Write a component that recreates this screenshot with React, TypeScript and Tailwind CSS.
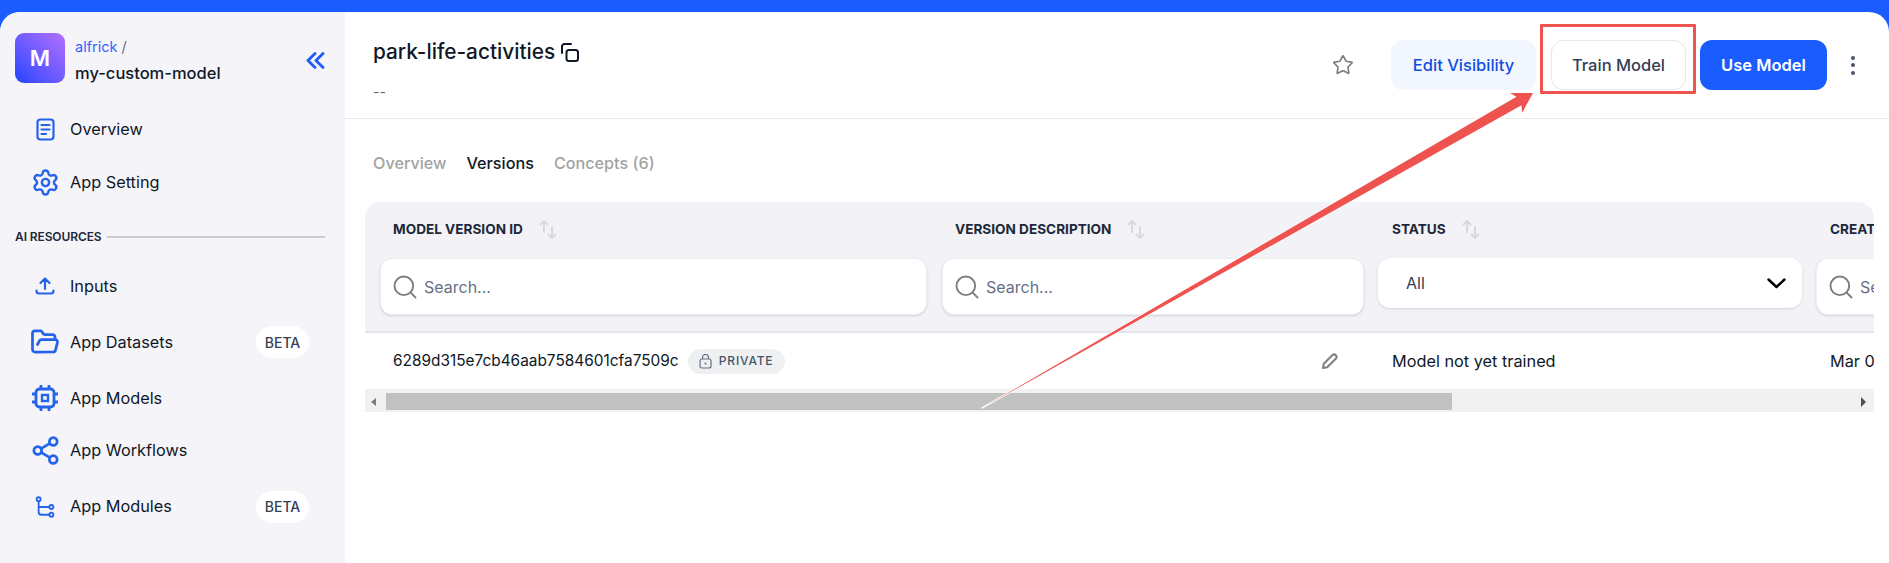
import { FolderOpen, Search, Settings, Share2, Star } from 'lucide-react';
import type { ReactNode } from 'react';

const OverviewIcon = () => (
    <svg width="19" height="23" viewBox="0 0 19 23" fill="none" stroke="currentColor" strokeWidth="2.2" strokeLinecap="round">
        <rect x="1.500" y="1.500" width="16" height="20" rx="3" />
        <path d="M5.500 7h8M5.500 11.500h8M5.500 16h4.500" />
    </svg>
);

const UploadIcon = () => (
    <svg width="20" height="18" viewBox="0 0 20 18" fill="none" stroke="currentColor" strokeWidth="2.2" strokeLinecap="round" strokeLinejoin="round">
        <path d="M10 12V2M5.500 6 10 1.500 14.500 6M1.500 13.500v.500A2.500 2.500 0 0 0 4 16.500h12a2.500 2.500 0 0 0 2.500-2.500v-.500" />
    </svg>
);

const ChipIcon = () => (
    <svg width="28" height="28" viewBox="0 0 28 28" fill="none" stroke="currentColor" strokeWidth="2.800">
        <rect x="5" y="5" width="18" height="18" rx="3.500" />
        <rect x="11" y="11" width="6" height="6" strokeWidth="2.400" />
        <path d="M10 1v4M18 1v4M10 23v4M18 23v4M1 10h4M1 18h4M23 10h4M23 18h4" />
    </svg>
);

const ModulesIcon = () => (
    <svg width="20" height="22" viewBox="0 0 22 24" fill="none" stroke="currentColor" strokeWidth="2">
        <circle cx="4" cy="3.500" r="2.200" />
        <circle cx="18" cy="12" r="2.200" />
        <circle cx="18" cy="20.500" r="2.200" />
        <path d="M4 6v11.500a3 3 0 0 0 3 3h8.800M4 12h11.800" />
    </svg>
);

const CollapseIcon = () => (
    <svg width="19" height="17" viewBox="0 0 19 17" fill="none" stroke="#1b5cff" strokeWidth="2.800" strokeLinecap="round" strokeLinejoin="round">
        <path d="M9 1.500 2 8.500l7 7M17 1.500l-7 7 7 7" />
    </svg>
);

const CopyIcon = () => (
    <svg width="18" height="19" viewBox="0 0 18 19" fill="none" stroke="#101828" strokeWidth="2" strokeLinecap="round">
        <rect x="5.500" y="7" width="11.500" height="11" rx="2.500" />
        <path d="M1 10V3.500A2.500 2.500 0 0 1 3.500 1H10" />
    </svg>
);

const SortIcon = () => (
    <svg width="20" height="21" viewBox="0 0 20 21" fill="none" stroke="#d5d9e0" strokeWidth="2" strokeLinecap="round" strokeLinejoin="round">
        <path d="M6 13V2M2.500 5.500 6 2l3.500 3.500M14 8v11M10.500 15.500 14 19l3.500-3.500" />
    </svg>
);

const LockIcon = () => (
    <svg width="13" height="15" viewBox="0 0 13 15" fill="none" stroke="#667085" strokeWidth="1.200">
        <rect x="1" y="5" width="11" height="9" rx="2" />
        <path d="M3.500 5V3.500a3 3 0 0 1 6 0V5" />
        <circle cx="6.500" cy="9.500" r="1" fill="#667085" stroke="none" />
    </svg>
);

const PencilIcon = () => (
    <svg width="18" height="18" viewBox="0 0 18 18" fill="none" stroke="#7d7d7d" strokeWidth="2" strokeLinejoin="round">
        <path d="M2 16l.800-4.200L11.500 3a2.500 2.500 0 0 1 3.500 3.500L6.200 15.200z" />
    </svg>
);

const SelectChevron = () => (
    <svg width="19" height="11" viewBox="0 0 19 11" fill="none" stroke="#000000" strokeWidth="2.400" strokeLinecap="round" strokeLinejoin="round">
        <path d="M1.500 1.500 9.500 9l8-7.500" />
    </svg>
);

const BetaPill = () => (
    <span className="ml-auto mr-[36px] flex h-8 w-[53px] items-center justify-center rounded-full bg-white text-[14px] font-medium text-[#344054]">
        BETA
    </span>
);

const NavItem = ({ icon, label, beta, height }: { icon: ReactNode; label: string; beta?: boolean; height: string }) => (
    <div className={`flex items-center ${height}`}>
        <span className="flex w-[70px] shrink-0 items-center justify-center pl-[20px] text-[#2563eb]">{icon}</span>
        <span className="text-[16.300px] text-[#101828]">{label}</span>
        {beta && <BetaPill />}
    </div>
);

const SearchBox = ({ width }: { width: string }) => (
    <div className={`flex h-[57px] shrink-0 items-center gap-[5px] rounded-xl border border-[#eceef2] bg-white pl-[10px] shadow-sm ${width}`}>
        <Search size={28} strokeWidth={1.600} className="shrink-0 text-[#7d7d7d]" />
        <span className="text-[16px] text-[#667085]">Search...</span>
    </div>
);

const ColumnLabel = ({ label }: { label: string }) => (
    <div className="flex items-center gap-[15px]">
        <span className="text-[13.600px] font-bold whitespace-nowrap text-[#1d2939]">{label}</span>
        <SortIcon />
    </div>
);

const App = () => {
    return (
        <div className="relative h-[563px] w-full overflow-hidden bg-[#1b5cff] pt-3 font-['Inter',sans-serif]">
            <div className="flex h-full overflow-hidden rounded-t-[20px] bg-white">
                <aside className="w-[345px] shrink-0 bg-[#f4f4f9]">
                    <div className="flex h-[91px] items-start pl-[15px] pt-[21px]">
                        <div className="flex h-[50px] w-[50px] items-center justify-center rounded-[9px] bg-gradient-to-tr from-[#1b40ff] to-[#b46cff] text-[22px] font-semibold text-white">
                            M
                        </div>
                        <div className="ml-[10px] flex w-[231px] shrink-0 flex-col">
                            <span className="text-[14.500px] leading-[28px] text-[#3366ff]">
                                alfrick <span className="text-[#667085]">/</span>
                            </span>
                            <span className="pt-[1px] text-[16.500px] leading-[22px] font-medium text-[#101828]">my-custom-model</span>
                        </div>
                        <span className="mt-[19px]"><CollapseIcon /></span>
                    </div>

                    <NavItem icon={<OverviewIcon />} label="Overview" height="h-[53px]" />
                    <NavItem icon={<Settings size={29} strokeWidth={2} />} label="App Setting" height="h-[53px]" />

                    <div className="flex h-[49px] items-center gap-[5px] pt-[6px] pl-[15px] pr-[20px]">
                        <span className="text-[12px] font-semibold tracking-[-0.1px] whitespace-nowrap text-[#1d2939]">AI RESOURCES</span>
                        <div className="h-[2px] flex-1 bg-[#cccccc]" />
                    </div>

                    <NavItem icon={<UploadIcon />} label="Inputs" height="h-14" />
                    <NavItem icon={<FolderOpen size={30} strokeWidth={2.200} />} label="App Datasets" beta height="h-14" />
                    <NavItem icon={<ChipIcon />} label="App Models" height="h-14" />
                    <NavItem icon={<Share2 size={31} strokeWidth={2.100} />} label="App Workflows" height="h-[49px]" />
                    <NavItem icon={<ModulesIcon />} label="App Modules" beta height="h-[63px]" />
                </aside>

                <main className="min-w-0 flex-1">
                    <header className="flex h-[107px] items-start border-b border-[#e9e9ec] pl-[28px]">
                        <div className="pt-[24px]">
                            <div className="flex items-center gap-[6px]">
                                <span className="text-[20.800px] leading-[32px] font-medium text-[#101828]">park-life-activities</span>
                                <CopyIcon />
                            </div>
                            <div className="mt-4 text-[14px] leading-[16px] text-[#667085]">--</div>
                        </div>
                        <div className="ml-auto flex items-center pt-[28px]">
                            <Star size={22} strokeWidth={1.800} className="mr-[37px] text-[#7d7d7d]" />
                            <button className="h-[50px] w-[145px] rounded-xl bg-[#f2f6ff] text-[16.500px] font-medium text-[#0f4fe0]">Edit Visibility</button>
                            <button className="ml-[15px] h-[50px] w-[135px] rounded-xl border border-[#e4e7ec] bg-white text-[16.500px] font-medium text-[#344054]">Train Model</button>
                            <button className="ml-[14px] h-[50px] w-[127px] rounded-xl bg-[#1b5cff] text-[16.500px] font-semibold text-white">Use Model</button>
                            <div className="ml-[24px] mr-[34px] flex flex-col gap-[3.500px]">
                                <span className="h-1 w-1 rounded-full bg-[#475467]" />
                                <span className="h-1 w-1 rounded-full bg-[#475467]" />
                                <span className="h-1 w-1 rounded-full bg-[#475467]" />
                            </div>
                        </div>
                    </header>

                    <nav className="flex h-[83px] items-start gap-5 pl-[28px] pt-[32px] text-[16.200px] leading-[24px] font-medium text-[#a3a3a3]">
                        <span>Overview</span>
                        <span className="text-[#101828]">Versions</span>
                        <span>Concepts (6)</span>
                    </nav>

                    <div className="ml-5 w-[1509px] overflow-hidden rounded-t-2xl">
                        <div className="h-[131px] border-b-2 border-[#e4e4ea] bg-[#f2f2f7] pt-[17px]">
                            <div className="flex h-[20px] pl-[28px]">
                                <div className="w-[562px] shrink-0"><ColumnLabel label="MODEL VERSION ID" /></div>
                                <div className="w-[437px] shrink-0"><ColumnLabel label="VERSION DESCRIPTION" /></div>
                                <div className="w-[438px] shrink-0"><ColumnLabel label="STATUS" /></div>
                                <span className="text-[13.600px] font-bold text-[#1d2939]">CREATED</span>
                            </div>
                            <div className="mt-[19px] flex pl-[15px]">
                                <SearchBox width="w-[547px]" />
                                <div className="ml-[15px] shrink-0"><SearchBox width="w-[422px]" /></div>
                                <div className="ml-[14px] flex h-[50px] w-[424px] shrink-0 items-center justify-between rounded-xl bg-white pl-7 pr-4 shadow-sm">
                                    <span className="text-[16px] text-[#344054]">All</span>
                                    <SelectChevron />
                                </div>
                                <div className="ml-[14px] shrink-0"><SearchBox width="w-[200px]" /></div>
                            </div>
                        </div>

                        <div className="flex h-[56px] items-center whitespace-nowrap pl-[28px] text-[16.300px] text-[#101828]">
                            <div className="flex w-[562px] shrink-0 items-center gap-[9px]">
                                <span className="text-[15.400px]">6289d315e7cb46aab7584601cfa7509c</span>
                                <span className="flex h-[25px] w-[97px] items-center justify-center gap-[7px] rounded-full bg-[#eef0f2] text-[12px] font-medium tracking-[0.8px] text-[#475467]">
                                    <LockIcon />
                                    PRIVATE
                                </span>
                            </div>
                            <div className="flex w-[437px] shrink-0 pl-[366px]">
                                <PencilIcon />
                            </div>
                            <div className="w-[438px] shrink-0">Model not yet trained</div>
                            <div>Mar 09, 2023</div>
                        </div>

                        <div className="flex h-[23px] items-center bg-[#f1f1f1] pl-[6px] pt-[2px]">
                            <span className="h-0 w-0 border-y-[4px] border-r-[5px] border-y-transparent border-r-[#7d7d7d]" />
                            <div className="ml-[10px] h-[17px] w-[1066px] bg-[#c1c1c1]" />
                            <span className="ml-auto mr-[8px] h-0 w-0 border-y-[5px] border-l-[5px] border-y-transparent border-l-[#505050]" />
                        </div>
                    </div>
                </main>
            </div>

            {/* annotation drawn over the page */}
            <div className="pointer-events-none absolute top-[24px] left-[1540px] h-[70px] w-[156px] rounded-[1px] border-[3px] border-[#ef5350]" />
            <svg className="pointer-events-none absolute top-0 left-0" width="1889" height="563" viewBox="0 0 1889 563">
                <polygon
                    points="1533,93 1510,93 1516.500,96.700 982,408 1521.500,105.300 1522,113"
                    fill="#ef5350"
                    stroke="white"
                    strokeWidth="1.500"
                    strokeLinejoin="round"
                    paintOrder="stroke"
                />
            </svg>
        </div>
    );
};

export default App;
